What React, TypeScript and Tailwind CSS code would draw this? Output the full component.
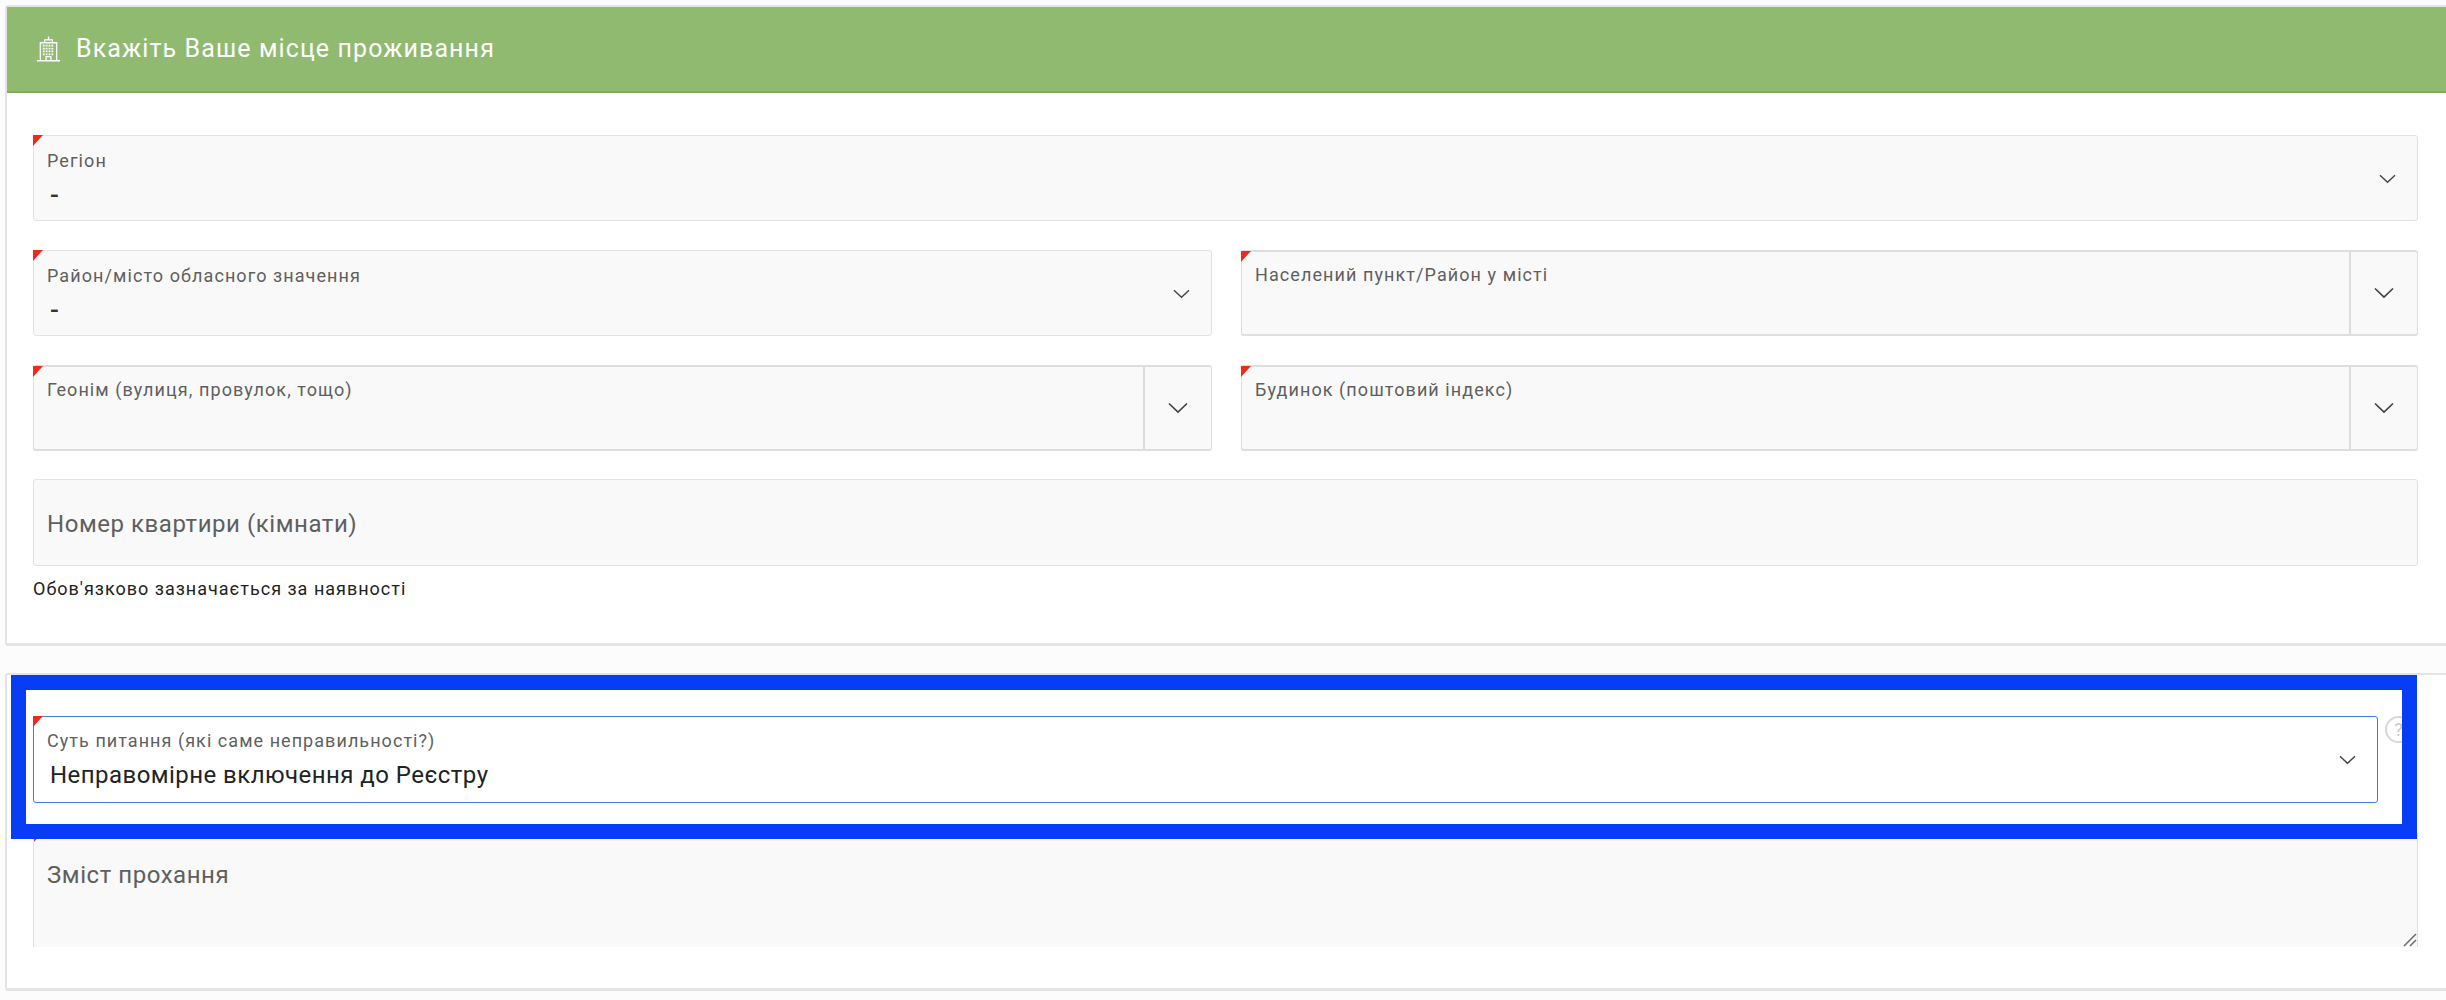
type FieldProps = {
  label: string
  value?: string
  addon?: boolean
  className?: string
}

function Chevron({ className }: { className: string }) {
  return (
    <svg viewBox="0 0 20 12" fill="none" stroke="#444444" strokeWidth="1.7" className={className}>
      <polyline points="1,1.5 10,10 19,1.5" />
    </svg>
  )
}

function Corner() {
  return <span className="absolute -left-px -top-px h-[11px] w-[10px] bg-[#ee2a1c] [clip-path:polygon(0_0,100%_0,0_100%)]" />
}

function BuildingIcon() {
  return (
    <svg viewBox="0 0 24 26" fill="none" stroke="#ffffff" strokeWidth="1.4" className="h-[26px] w-[23px]">
      <path d="M12 0v3M8 6.5V3.5h8v3M3.5 25V6.5h17V25M0 25.3h24" />
      <path d="M9.5 25v-4h5v4" />
      <path d="M6 9.5h12M6 12.5h12M6 15.5h12M6 18.5h12" strokeDasharray="2 1" strokeWidth="1.8" />
    </svg>
  )
}

function SelectField({ label, value, addon, className = '' }: FieldProps) {
  return (
    <div className={`relative flex h-[86px] rounded-[3px] bg-[#f9f9f9] ${addon ? 'border-y-2 border-x border-[#dedede]' : 'border border-[#e2e2e2]'} ${className}`}>
      <Corner />
      <div className={`min-w-0 flex-1 pl-[13px] ${addon ? 'pt-[11px]' : 'pt-[13px]'}`}>
        <div className="text-[18px] leading-[24px] tracking-[1.08px] text-[#5f5f5f]">{label}</div>
        {value && <div className="mt-[8px] pl-[3px] text-[26px] font-medium leading-[28px] text-[#333333]">{value}</div>}
      </div>
      {addon ? (
        <div className="flex w-[68px] items-center justify-center border-l-2 border-[#dcdcdc]">
          <Chevron className="h-[12px] w-[20px]" />
        </div>
      ) : (
        <div className="flex w-[60px] items-center justify-center pl-[1px] pt-[1px]">
          <Chevron className="h-[10px] w-[17px]" />
        </div>
      )}
    </div>
  )
}

export default function App() {
  return (
    <div className="h-[1000px] w-[2446px] overflow-hidden bg-[#fcfcfc] font-['Roboto','Noto_Sans',sans-serif]">
      {/* address card */}
      <section className="ml-[5px] mt-[5px] h-[641px] w-[2470px] rounded-[3px] border-2 border-b-[3px] border-[#e4e4e4] bg-white">
        <header className="flex h-[86px] items-center border-b-2 border-[#83ab64] bg-[#90ba70] pl-[30px]">
          <BuildingIcon />
          <h2 className="ml-[16px] text-[25px] font-normal tracking-[1.1px] text-white">Вкажіть Ваше місце проживання</h2>
        </header>
        <div className="w-[2411px] pl-[26px] pt-[42px]">
          <SelectField label="Регіон" value="-" />
          <div className="mt-[29px] grid grid-cols-[1179px_1fr] gap-x-[29px] gap-y-[29px]">
            <SelectField label="Район/місто обласного значення" value="-" />
            <SelectField label="Населений пункт/Район у місті" addon />
            <SelectField label="Геонім (вулиця, провулок, тощо)" addon />
            <SelectField label="Будинок (поштовий індекс)" addon />
          </div>
          <div className="mt-[28px] flex h-[87px] items-center rounded-[3px] border border-[#e2e2e2] bg-[#f9f9f9] pl-[13px] pt-[2px]">
            <span className="text-[24px] tracking-[0.55px] text-[#5f5f5f]">Номер квартири (кімнати)</span>
          </div>
          <p className="mt-[11px] text-[18px] leading-[24px] tracking-[1px] text-[#222222]">Обов'язково зазначається за наявності</p>
        </div>
      </section>

      {/* request card */}
      <section className="relative ml-[5px] mt-[27px] h-[318px] w-[2470px] rounded-[3px] border-2 border-b-[3px] border-[#e4e4e4] bg-white">
        <div className="w-[2411px] pl-[26px] pt-[41px]">
          <div className="flex items-start">
            <div className="relative flex h-[87px] w-[2345px] rounded-[3px] border border-[#3b80dd] bg-white">
              <Corner />
              <div className="flex-1 pl-[13px] pt-[12px]">
                <div className="text-[18px] leading-[24px] tracking-[1.05px] text-[#5f5f5f]">Суть питання (які саме неправильності?)</div>
                <div className="mt-[8px] pl-[3px] text-[24px] leading-[28px] tracking-[0.45px] text-[#222222]">Неправомірне включення до Реєстру</div>
              </div>
              <div className="flex w-[60px] items-center justify-center pt-[1px]">
                <Chevron className="h-[10px] w-[17px]" />
              </div>
            </div>
            <span className="ml-[7px] flex h-[27px] w-[27px] shrink-0 items-center justify-center rounded-full border-2 border-[#d8d8d8] text-[18px] text-[#c8c8c8]">?</span>
          </div>
          <div className="relative mt-[29px] h-[115px] overflow-hidden rounded-t-[3px] border-x border-t border-[#e2e2e2] bg-[#f9f9f9] pl-[13px] pt-[24px]">
            <Corner />
            <span className="text-[24px] tracking-[0.55px] text-[#5f5f5f]">Зміст прохання</span>
            <svg viewBox="0 0 14 14" fill="none" stroke="#6b6b6b" strokeWidth="1.5" className="absolute bottom-0 right-0 h-[14px] w-[14px]">
              <path d="M1 13L13 1M7 13L13 7" />
            </svg>
          </div>
        </div>
        {/* highlight frame drawn over the form */}
        <div className="absolute left-[4px] top-0 h-[164px] w-[2406px] border-[15px] border-[#073df5]" />
      </section>
    </div>
  )
}
